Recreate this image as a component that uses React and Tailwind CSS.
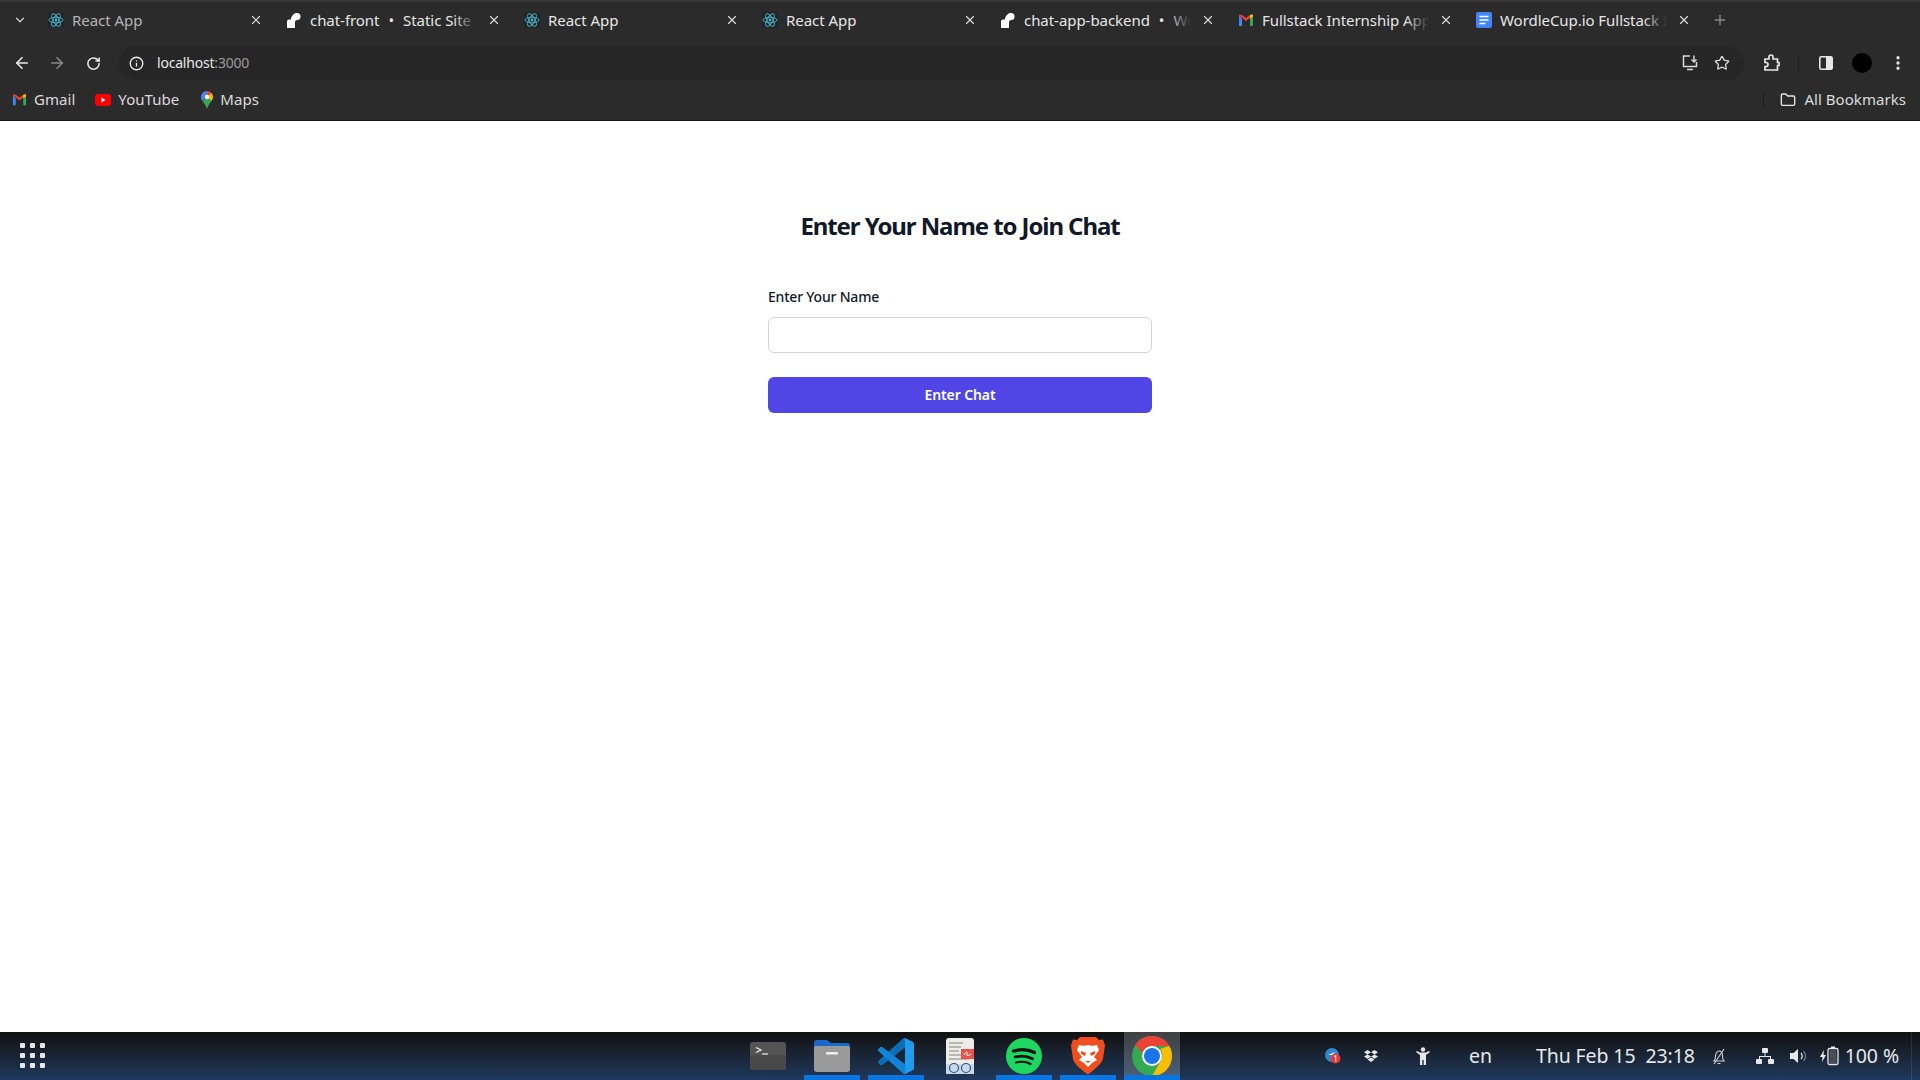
import React from 'react'
import { ArrowLeft, ArrowRight, RotateCw, Info, Star, EllipsisVertical, Folder, X, Plus, ChevronDown } from 'lucide-react'

const ReactIcon = () => (
  <svg className="w-4 h-4 shrink-0" viewBox="0 0 16 16" fill="none" stroke="#4fb3c8" strokeWidth="0.9">
    <rect width="16" height="16" fill="#20262a" stroke="none" />
    <ellipse cx="8" cy="8" rx="7" ry="2.8" />
    <ellipse cx="8" cy="8" rx="7" ry="2.8" transform="rotate(60 8 8)" />
    <ellipse cx="8" cy="8" rx="7" ry="2.8" transform="rotate(120 8 8)" />
    <circle cx="8" cy="8" r="1.4" fill="#4fb3c8" stroke="none" />
  </svg>
)

const RenderIcon = () => (
  <svg className="w-4 h-4 shrink-0" viewBox="0 0 16 16" fill="#fff">
    <path d="M1 9.500V16h8v-6c0-1 1-2 2-2V1C8 1 5 4 5 7.500H3a2 2 0 0 0-2 2z" />
    <circle cx="11" cy="4.500" r="3.500" />
  </svg>
)

const GmailIcon = ({ size = 16 }) => (
  <svg className="shrink-0" width={size} height={size} viewBox="0 0 16 16">
    <path d="M1 3.500V14h3V7z" fill="#4285f4" />
    <path d="M15 3.500V14h-3V7z" fill="#34a853" />
    <path d="M1 3.500 8 9l7-5.500v-1L12 3 8 6 4 3 1 2.500z" fill="#ea4335" />
    <path d="M12 3l3-.5v2L12 7z" fill="#fbbc04" />
  </svg>
)

const DocsIcon = () => (
  <svg className="w-4 h-4 shrink-0" viewBox="0 0 16 16">
    <rect x="0" y="0" width="16" height="16" rx="2" fill="#4285f4" />
    <path d="M3.500 4.500h9M3.500 8h9M3.500 11.500h6" stroke="#fff" strokeWidth="1.600" />
  </svg>
)

const tabs = [
  { title: 'React App', icon: <ReactIcon />, dim: true },
  { title: 'chat-front', sub: 'Static Site', icon: <RenderIcon /> },
  { title: 'React App', icon: <ReactIcon /> },
  { title: 'React App', icon: <ReactIcon /> },
  { title: 'chat-app-backend', sub: 'Web', icon: <RenderIcon /> },
  { title: 'Fullstack Internship Application', icon: <GmailIcon /> },
  { title: 'WordleCup.io Fullstack Intern', icon: <DocsIcon /> },
]

function Tab({ tab }) {
  return (
    <div className="w-[238px] h-full pl-3 pr-[11px] flex items-center shrink-0">
      {tab.icon}
      <div className="relative ml-2 flex-1 overflow-hidden whitespace-nowrap">
        <span className={tab.dim ? 'text-[#b4b4b4]' : 'text-[#e6e6e6]'}>{tab.title}</span>
        {tab.sub && <span className="text-[#e6e6e6]"><span className="mx-[9px]">•</span>{tab.sub}</span>}
        <div className="absolute right-0 top-0 bottom-0 w-6 bg-gradient-to-r from-transparent to-[#2b2b2b]" />
      </div>
      <X className="w-[14px] h-[14px] ml-[10px] shrink-0 text-[#d8d8d8]" strokeWidth={2} />
    </div>
  )
}

const Bookmark = ({ icon, label, className }) => (
  <div className={`flex items-center ${className}`}>
    {icon}
    <span className="ml-[7px]">{label}</span>
  </div>
)

function TopChrome() {
  return (
    <div className="h-[121px] bg-[#2b2b2b] border-b border-[#141414] border-t-2 border-t-[#383838] text-[#dcdcdc] font-['Noto_Sans',sans-serif] shrink-0">
      <div className="h-[44px] flex items-center text-[15px] tracking-[-0.05px] pb-2">
        <div className="w-[36px] flex justify-center pl-1">
          <ChevronDown className="w-[14px] h-[14px] text-[#c8c8c8]" strokeWidth={2.4} />
        </div>
        {tabs.map((t, i) => <Tab key={i} tab={t} />)}
        <Plus className="w-4 h-4 ml-[10px] text-[#8a8a8a]" />
      </div>

      <div className="h-[34px] flex items-center">
        <ArrowLeft className="w-[18px] h-[18px] ml-[13px] text-[#e8e8e8]" strokeWidth={2.2} />
        <ArrowRight className="w-[18px] h-[18px] ml-[17px] text-[#8a8a8a]" strokeWidth={2.2} />
        <RotateCw className="w-[15px] h-[15px] ml-[20px] text-[#e8e8e8]" strokeWidth={2.4} />
        <div className="ml-[18px] w-[1625px] h-full rounded-full bg-[#262626] flex items-center">
          <Info className="w-[15px] h-[15px] ml-[10px] text-[#e8e8e8]" strokeWidth={2.2} />
          <span className="ml-[13px] pb-[2px] text-[14px] tracking-[-0.2px] text-[#e8e8e8]">localhost<span className="text-[#9a9a9a]">:3000</span></span>
          <div className="ml-auto flex items-center">
            <svg className="w-[18px] h-[18px] text-[#d8d8d8]" viewBox="0 0 18 18" fill="none" stroke="currentColor" strokeWidth="1.500">
              <path d="M9 2H2.500v10.500h13V8" />
              <path d="M6 15.500h6M13 1.500v6M10.500 5.500 13 8l2.500-2.500" />
            </svg>
            <Star className="w-[16px] h-[16px] ml-[15px] mr-[14px] text-[#d8d8d8]" strokeWidth={2} />
          </div>
        </div>
        <svg className="ml-[19px] w-[18px] h-[18px] text-[#e8e8e8]" viewBox="0 0 18 18" fill="none" stroke="currentColor" strokeWidth="1.700">
          <path d="M2 5h4V3a2 2 0 0 1 4 0v2h4.500v3.500H16v3h-1.500V16H2v-3.500h1a1.700 1.700 0 0 0 0-4H2z" />
        </svg>
        <div className="ml-[17px] w-px h-[18px] bg-[#1f1f1f]" />
        <svg className="ml-[20px] w-[14px] h-[14px]" viewBox="0 0 14 14">
          <rect x="0.800" y="0.800" width="12.400" height="12.400" rx="1.500" fill="none" stroke="#e8e8e8" strokeWidth="1.600" />
          <rect x="7" y="1" width="6" height="12" fill="#e8e8e8" />
        </svg>
        <div className="ml-[19px] w-5 h-5 rounded-full bg-black" />
        <EllipsisVertical className="ml-[17px] w-[18px] h-[18px] text-[#e8e8e8]" strokeWidth={2.4} />
      </div>

      <div className="h-[39px] flex items-center text-[15px] tracking-[0.05px] pl-[12px]">
        <Bookmark icon={<GmailIcon size={15} />} label="Gmail" />
        <Bookmark
          className="ml-[20px]"
          label="YouTube"
          icon={
            <svg width="16" height="12" viewBox="0 0 16 12">
              <rect width="16" height="12" rx="3" fill="#f00" />
              <path d="M6.500 3.500v5L10.500 6z" fill="#fff" />
            </svg>
          }
        />
        <Bookmark
          className="ml-[22px]"
          label="Maps"
          icon={
            <svg width="12" height="18" viewBox="0 0 12 18">
              <path d="M6 0a6 6 0 0 0-4.500 10L6 5z" fill="#4285f4" />
              <path d="M6 0a6 6 0 0 1 4.500 2L6 7z" fill="#ea4335" />
              <path d="M10.500 2A6 6 0 0 1 12 6c0 1.500-.6 2.800-1.500 4L6 6z" fill="#fbbc04" />
              <path d="M1.500 10 6 6l4.500 4C8.800 12.500 6.800 14.500 6 18c-.8-3.500-2.800-5.500-4.500-8z" fill="#34a853" />
              <circle cx="6" cy="6" r="2.200" fill="#fff" />
            </svg>
          }
        />
        <div className="ml-auto w-px h-[18px] bg-[#1f1f1f] mr-[16px]" />
        <Folder className="w-4 h-4 text-[#e8e8e8]" strokeWidth={2} />
        <span className="ml-2 mr-[14px]">All Bookmarks</span>
      </div>
    </div>
  )
}

function JoinForm() {
  return (
    <div className="flex-1 bg-white pt-[87px] font-['Noto_Sans',sans-serif]">
      <h2 className="text-center text-2xl leading-9 font-bold tracking-[-1.08px] text-[#111827]">Enter Your Name to Join Chat</h2>
      <form className="mt-[41px] mx-auto w-[384px]" onSubmit={(e) => e.preventDefault()}>
        <label className="block text-sm leading-6 font-medium tracking-[-0.2px] text-[#111827]">Enter Your Name</label>
        <input type="text" className="mt-2 block w-full h-9 rounded-md border border-[#d1d5db] outline-none" />
        <button type="submit" className="mt-6 w-full h-9 rounded-md bg-[#4f46e5] text-sm font-semibold tracking-[-0.1px] text-white">Enter Chat</button>
      </form>
    </div>
  )
}

const DockSlot = ({ children, running, active }) => (
  <div className={`relative w-14 h-full flex items-center justify-center pb-[1px] ${active ? 'bg-white/20' : ''}`}>
    {children}
    {running && <div className="absolute left-0 right-0 bottom-0 h-[5px] bg-[#0a74e0]" />}
  </div>
)

function Dock() {
  return (
    <div className="flex h-full ml-[676px] gap-2">
      <DockSlot>
        <svg width="36" height="28" viewBox="0 0 36 28">
          <rect width="36" height="28" rx="3" fill="#545454" />
          <rect y="13" width="36" height="15" rx="3" fill="#484848" />
          <path d="M6 5.500 11 8l-5 2.500" fill="none" stroke="#eee" strokeWidth="1.200" />
          <path d="M12 12h6" stroke="#eee" strokeWidth="1.200" />
        </svg>
      </DockSlot>
      <DockSlot running>
        <svg width="36" height="33" viewBox="0 0 36 33">
          <path d="M0 4a3 3 0 0 1 3-3h10l4 3h16a3 3 0 0 1 3 3v6H0z" fill="#1a68c7" />
          <path d="M0 9a2 2 0 0 1 2-2h32a2 2 0 0 1 2 2v21a3 3 0 0 1-3 3H3a3 3 0 0 1-3-3z" fill="#9a9a9a" />
          <rect x="12" y="13" width="12" height="2.500" rx="1" fill="#f0f0f0" />
        </svg>
      </DockSlot>
      <DockSlot running>
        <svg width="36" height="36" viewBox="0 0 100 100">
          <path d="M96.500 10.800 75.900.9a6.200 6.200 0 0 0-7.100 1.200L1.300 63.500a4.200 4.200 0 0 0 0 6.200l5.500 5a4.200 4.200 0 0 0 5.300.2L93.300 13.400c2.700-2 6.700-.1 6.700 3.300v-.2a6.200 6.200 0 0 0-3.500-5.700z" fill="#0b6fb8" />
          <path d="M96.500 89.200 75.900 99.100a6.200 6.200 0 0 1-7.100-1.200L1.300 36.500a4.200 4.200 0 0 1 0-6.200l5.500-5a4.200 4.200 0 0 1 5.300-.2L93.300 86.600c2.700 2 6.700.1 6.700-3.300v.2a6.200 6.200 0 0 1-3.500 5.700z" fill="#0f84d8" />
          <path d="M75.900 99.100a6.200 6.200 0 0 1-7.100-1.200c2.300 2.300 6.200.7 6.200-2.600V4.700c0-3.300-3.900-4.900-6.200-2.600A6.200 6.200 0 0 1 75.900.9l20.600 9.900A6.200 6.200 0 0 1 100 16.400v67.200a6.200 6.200 0 0 1-3.500 5.600z" fill="#1f9cf0" />
        </svg>
      </DockSlot>
      <DockSlot>
        <svg width="28" height="36" viewBox="0 0 28 36">
          <rect width="28" height="36" rx="3" fill="#eeece6" />
          <path d="M3 5h14M3 9h12M3 13h10M3 17h12M3 21h20" stroke="#a8a69e" strokeWidth="1.500" />
          <rect x="15" y="11" width="13" height="10" fill="#e9524a" />
          <path d="M18 17c2-4 4-4 3-1s3 1 4 0" stroke="#fff" fill="none" />
          <rect y="26" width="28" height="10" fill="#c9d8e4" />
          <circle cx="8" cy="30" r="4.500" fill="none" stroke="#26508a" strokeWidth="1.200" />
          <circle cx="20" cy="30" r="4.500" fill="none" stroke="#26508a" strokeWidth="1.200" />
        </svg>
      </DockSlot>
      <DockSlot running>
        <svg width="36" height="36" viewBox="0 0 36 36">
          <circle cx="18" cy="18" r="18" fill="#1ed760" />
          <g fill="none" stroke="#111" strokeLinecap="round">
            <path d="M7.500 13c7-2 15-1.500 21 1.500" strokeWidth="3.200" />
            <path d="M9 19c6-1.500 12.500-1 17.500 1.800" strokeWidth="2.700" />
            <path d="M10 24.500c5-1.200 10.500-.8 14.500 1.500" strokeWidth="2.200" />
          </g>
        </svg>
      </DockSlot>
      <DockSlot running>
        <svg width="34" height="38" viewBox="0 0 34 38">
          <path d="M9 0h16l3 3 4-.5 2 6-2 13c-.5 4-7 10-15 16C9 32 2.500 26 2 22L0 8.500l2-6L6 3z" fill="#f04e1f" />
          <path d="M8 8c3 1 6 1 9 0 3 1 6 1 9 0l2 5-5 7 3 3-5 3-4 4-4-4-5-3 3-3-5-7z" fill="#fff" />
          <path d="M10 14l5 2-1 3-4-2zM24 14l-5 2 1 3 4-2zM14 24h6l-3 2z" fill="#f04e1f" />
        </svg>
      </DockSlot>
      <DockSlot running active>
        <svg width="40" height="40" viewBox="0 0 40 40">
          <circle cx="20" cy="20" r="20" fill="#34a853" />
          <path d="M20 0a20 20 0 0 1 17.300 10H20a10 10 0 0 0-9.500 7L3.200 9A20 20 0 0 1 20 0z" fill="#ea4335" />
          <path d="M37.300 10A20 20 0 0 1 20 40l8.700-15A10 10 0 0 0 28 13z" fill="#fbbc04" />
          <circle cx="20" cy="20" r="10" fill="#fff" />
          <circle cx="20" cy="20" r="8" fill="#1a73e8" />
        </svg>
      </DockSlot>
    </div>
  )
}

function Tray() {
  return (
    <div className="ml-auto flex items-center h-full text-[#e8e8e8] text-[19.5px] font-['Noto_Sans',sans-serif] tracking-[-0.1px]">
      <svg width="16" height="16" viewBox="0 0 16 16">
        <circle cx="7" cy="7" r="7" fill="#2f86d0" />
        <path d="M3 7l7-3-2 3z" fill="#dff" />
        <circle cx="10.500" cy="10.500" r="5" fill="#e03a3a" />
        <text x="10.500" y="13.500" fontSize="8" textAnchor="middle" fill="#fff">1</text>
      </svg>
      <svg className="ml-[23px]" width="14" height="13" viewBox="0 0 14 13" fill="#e8e8e8">
        <path d="M3.500 0 7 2.200 3.500 4.400 0 2.200zM10.500 0 14 2.200l-3.500 2.200L7 2.200zM3.500 4.400 7 6.600 3.500 8.800 0 6.600zM10.500 4.400 14 6.600l-3.500 2.200L7 6.600zM3.500 9.600 7 7.400l3.500 2.200L7 12z" />
      </svg>
      <svg className="ml-[37px]" width="16" height="18" viewBox="0 0 16 18" fill="#e8e8e8">
        <circle cx="8" cy="2.500" r="2.200" />
        <path d="M1 5l1-1 3 1.500h6L14 4l1 1-4 3v10H8.700v-5H7.300v5H5V8z" />
      </svg>
      <span className="ml-[38px]">en</span>
      <span className="ml-[44px] whitespace-pre">Thu Feb 15  23:18</span>
      <svg className="ml-[16px]" width="16" height="17" viewBox="0 0 16 17" fill="none" stroke="#d0d0d0" strokeWidth="1.100">
        <path d="M3 13c1.500-1.500 1.500-3 1.500-5S6 3 8 3s3.500 2 3.500 5 0 3.500 1.500 5z" />
        <path d="M6.500 15.500h3M13 1 3 16" />
      </svg>
      <svg className="ml-[29px]" width="18" height="17" viewBox="0 0 18 17" fill="#e8e8e8">
        <rect x="6" y="0" width="6" height="5" rx="1" />
        <rect x="0" y="11" width="6" height="5" rx="1" />
        <rect x="12" y="11" width="6" height="5" rx="1" />
        <path d="M8.500 5h1v3H15v3h-1V9H4v2H3V8h5.500z" />
      </svg>
      <svg className="ml-[16px]" width="18" height="16" viewBox="0 0 18 16">
        <path d="M0 5h3.500L8 1v14l-4.500-4H0z" fill="#e8e8e8" />
        <path d="M11 5c1.500 1.500 1.500 4.500 0 6" stroke="#e8e8e8" fill="none" strokeWidth="1.200" />
        <path d="M13.500 3c2.500 3 2.500 7 0 10" stroke="#777" fill="none" strokeWidth="1.200" />
      </svg>
      <svg className="ml-[11px]" width="20" height="20" viewBox="0 0 20 20">
        <path d="M5 4 1 11h2.500L3 16l4-7H4.500z" fill="#e8e8e8" />
        <rect x="9" y="2.500" width="10" height="16" rx="1.500" fill="none" stroke="#e8e8e8" strokeWidth="1.300" />
        <rect x="12" y="0.500" width="4" height="2" fill="#e8e8e8" />
        <rect x="10.500" y="4" width="7" height="13" fill="#4a4f56" />
      </svg>
      <span className="ml-[6px] mr-[12px]">100 %</span>
      <div className="w-[9px] h-full border-l border-white/10" />
    </div>
  )
}

function Taskbar() {
  return (
    <div className="h-[48px] shrink-0 flex bg-gradient-to-b from-[#111111] to-[#1f3a5e]">
      <div className="w-[64px] shrink-0 pl-[20px] pt-[11px]">
        <div className="grid grid-cols-3 gap-[5px] w-[25px]">
          {Array.from({ length: 9 }).map((_, i) => (
            <div key={i} className="w-[5px] h-[5px] rounded-[1px] bg-[#e8e8e8]" />
          ))}
        </div>
      </div>
      <Dock />
      <Tray />
    </div>
  )
}

export default function App() {
  return (
    <div className="h-screen flex flex-col overflow-hidden">
      <TopChrome />
      <JoinForm />
      <Taskbar />
    </div>
  )
}
